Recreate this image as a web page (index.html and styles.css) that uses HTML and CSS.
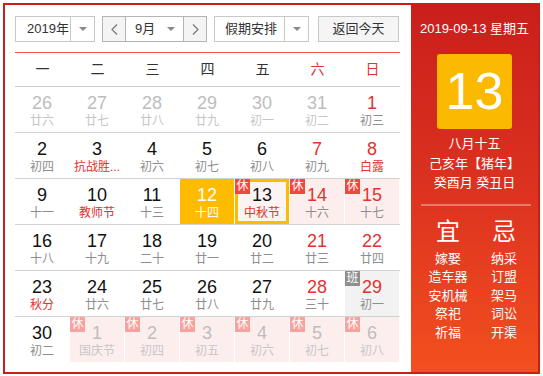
FILE: index.html
```html
<!DOCTYPE html>
<html lang="zh-CN">
<head>
<meta charset="utf-8">
<title>万年历</title>
<link rel="stylesheet" href="styles.css">
</head>
<body>
<div class="cal">
  <div class="main">
    <div class="toolbar">
      <div class="select year"><span class="val">2019年</span><span class="drop"><i class="tri"></i></span></div>
      <div class="month">
        <span class="nav"><svg width="7" height="11" viewBox="0 0 7 11"><polyline points="6,0.5 1,5.5 6,10.5" fill="none" stroke="#777" stroke-width="1.2"/></svg></span>
        <span class="mval"><span>9月</span><i class="tri"></i></span>
        <span class="nav"><svg width="7" height="11" viewBox="0 0 7 11"><polyline points="1,0.5 6,5.5 1,10.5" fill="none" stroke="#777" stroke-width="1.2"/></svg></span>
      </div>
      <div class="select hol"><span class="val">假期安排</span><span class="drop"><i class="tri"></i></span></div>
      <button class="back">返回今天</button>
    </div>
    <div class="weekhead">
      <span>一</span><span>二</span><span>三</span><span>四</span><span>五</span><span class="red">六</span><span class="red">日</span>
    </div>
    <div class="week">
      <div class="day other"><div class="num">26</div><div class="lun">廿六</div></div>
      <div class="day other"><div class="num">27</div><div class="lun">廿七</div></div>
      <div class="day other"><div class="num">28</div><div class="lun">廿八</div></div>
      <div class="day other"><div class="num">29</div><div class="lun">廿九</div></div>
      <div class="day other"><div class="num">30</div><div class="lun">初一</div></div>
      <div class="day other"><div class="num">31</div><div class="lun">初二</div></div>
      <div class="day wkend"><div class="num">1</div><div class="lun">初三</div></div>
    </div>
    <div class="week">
      <div class="day"><div class="num">2</div><div class="lun">初四</div></div>
      <div class="day"><div class="num">3</div><div class="lun fest">抗战胜...</div></div>
      <div class="day"><div class="num">4</div><div class="lun">初六</div></div>
      <div class="day"><div class="num">5</div><div class="lun">初七</div></div>
      <div class="day"><div class="num">6</div><div class="lun">初八</div></div>
      <div class="day wkend"><div class="num">7</div><div class="lun">初九</div></div>
      <div class="day wkend"><div class="num">8</div><div class="lun fest">白露</div></div>
    </div>
    <div class="week">
      <div class="day"><div class="num">9</div><div class="lun">十一</div></div>
      <div class="day"><div class="num">10</div><div class="lun fest">教师节</div></div>
      <div class="day"><div class="num">11</div><div class="lun">十三</div></div>
      <div class="day sel"><div class="num">12</div><div class="lun">十四</div></div>
      <div class="day rest today"><span class="tag">休</span><div class="num">13</div><div class="lun fest">中秋节</div></div>
      <div class="day rest wkend"><span class="tag">休</span><div class="num">14</div><div class="lun">十六</div></div>
      <div class="day rest wkend"><span class="tag">休</span><div class="num">15</div><div class="lun">十七</div></div>
    </div>
    <div class="week">
      <div class="day"><div class="num">16</div><div class="lun">十八</div></div>
      <div class="day"><div class="num">17</div><div class="lun">十九</div></div>
      <div class="day"><div class="num">18</div><div class="lun">二十</div></div>
      <div class="day"><div class="num">19</div><div class="lun">廿一</div></div>
      <div class="day"><div class="num">20</div><div class="lun">廿二</div></div>
      <div class="day wkend"><div class="num">21</div><div class="lun">廿三</div></div>
      <div class="day wkend"><div class="num">22</div><div class="lun">廿四</div></div>
    </div>
    <div class="week">
      <div class="day"><div class="num">23</div><div class="lun fest">秋分</div></div>
      <div class="day"><div class="num">24</div><div class="lun">廿六</div></div>
      <div class="day"><div class="num">25</div><div class="lun">廿七</div></div>
      <div class="day"><div class="num">26</div><div class="lun">廿八</div></div>
      <div class="day"><div class="num">27</div><div class="lun">廿九</div></div>
      <div class="day wkend"><div class="num">28</div><div class="lun">三十</div></div>
      <div class="day wkend work"><span class="tag">班</span><div class="num">29</div><div class="lun">初一</div></div>
    </div>
    <div class="week last">
      <div class="day"><div class="num">30</div><div class="lun">初二</div></div>
      <div class="day other rest"><span class="tag">休</span><div class="num">1</div><div class="lun">国庆节</div></div>
      <div class="day other rest"><span class="tag">休</span><div class="num">2</div><div class="lun">初四</div></div>
      <div class="day other rest"><span class="tag">休</span><div class="num">3</div><div class="lun">初五</div></div>
      <div class="day other rest"><span class="tag">休</span><div class="num">4</div><div class="lun">初六</div></div>
      <div class="day other rest"><span class="tag">休</span><div class="num">5</div><div class="lun">初七</div></div>
      <div class="day other rest"><span class="tag">休</span><div class="num">6</div><div class="lun">初八</div></div>
    </div>
  </div>
  <div class="side">
    <div class="s-date">2019-09-13 星期五</div>
    <div class="big">13</div>
    <div class="s-lunar">
      <div>八月十五</div>
      <div>己亥年【猪年】</div>
      <div>癸酉月 癸丑日</div>
    </div>
    <div class="sep"></div>
    <div class="yj">
      <div class="col">
        <div class="yj-t">宜</div>
        <div>嫁娶</div><div>造车器</div><div>安机械</div><div>祭祀</div><div>祈福</div>
      </div>
      <div class="col">
        <div class="yj-t">忌</div>
        <div>纳采</div><div>订盟</div><div>架马</div><div>词讼</div><div>开渠</div>
      </div>
    </div>
  </div>
</div>
</body>
</html>
```

FILE: styles.css
```css
body {
  margin: 0;
  font-family: "Liberation Sans", "Noto Sans CJK SC", sans-serif;
  background: #fff;
}

.cal {
  margin: 3px;
  width: 537px;
  height: 371px;
  box-sizing: border-box;
  border: 2px solid #c91f1b;
  display: flex;
  background: #fff;
}

.main {
  width: 406px;
  flex: none;
  box-sizing: border-box;
  padding: 11px 11px 0 10px;
}

/* toolbar */
.toolbar {
  display: flex;
  height: 26px;
  margin-bottom: 10px;
  font-size: 13px;
  color: #333;
}

.select {
  display: flex;
  box-sizing: border-box;
  height: 26px;
  border: 1px solid #c8c8c8;
  line-height: 24px;
}

.select .val {
  flex: 1;
  padding-left: 10px;
}

.select .drop {
  width: 23px;
  border-left: 1px solid #c8c8c8;
  display: flex;
  align-items: center;
  justify-content: center;
}

.tri {
  display: block;
  width: 0;
  height: 0;
  border-left: 4px solid transparent;
  border-right: 4px solid transparent;
  border-top: 4px solid #888;
}

.year {
  width: 80px;
}

.year .val {
  padding-left: 11px;
}

.month {
  display: flex;
  box-sizing: border-box;
  width: 105px;
  height: 26px;
  margin-left: 7px;
  border: 1px solid #b4b4b4;
  line-height: 24px;
}

.month .nav {
  width: 22px;
  background: #f4f4f4;
  display: flex;
  align-items: center;
  justify-content: center;
}

.month .nav:first-child {
  border-right: 1px solid #b4b4b4;
}

.month .nav:last-child {
  border-left: 1px solid #b4b4b4;
}

.mval {
  flex: 1;
  display: flex;
  align-items: center;
  justify-content: space-between;
  padding: 0 8px 0 9px;
}

.hol {
  width: 95px;
  margin-left: 7px;
}

.back {
  width: 81px;
  height: 26px;
  margin-left: 9px;
  padding: 0;
  border: 1px solid #c8c8c8;
  background: #f5f5f5;
  font-family: inherit;
  font-size: 13px;
  color: #333;
  line-height: 24px;
}

/* week header */
.weekhead {
  display: grid;
  grid-template-columns: repeat(7, 55px);
  height: 33px;
  border-top: 1px solid #f4564e;
  border-bottom: 1px solid #cfcfcf;
  line-height: 33px;
  font-size: 14px;
  color: #333;
  text-align: center;
}

.weekhead .red {
  color: #e2332e;
}

/* days */
.week {
  display: grid;
  grid-template-columns: repeat(7, 55px);
  height: 45px;
  border-bottom: 1px solid #d2d2d2;
}

.week.last {
  border-bottom: none;
}

.day {
  position: relative;
  margin-right: 1px;
  box-sizing: border-box;
  height: 45px;
  padding-top: 6px;
  text-align: center;
}

.num {
  font-size: 18px;
  line-height: 20px;
  color: #111;
}

.lun {
  font-size: 12px;
  line-height: 16px;
  color: #8e8e8e;
  white-space: nowrap;
}

.lun.fest {
  color: #e5302b;
}

.wkend .num {
  color: #e2332e;
}

.other .num {
  color: #bdbdbd;
}

.other .lun {
  color: #c6c6c6;
}

.rest {
  background: #fdeeee;
}

.tag {
  position: absolute;
  left: 0;
  top: 0;
  width: 15px;
  height: 15px;
  background: #f4453e;
  color: #fff;
  font-size: 12px;
  line-height: 15px;
  text-align: center;
}

.other .tag {
  background: #f7a29e;
}

.work {
  background: #f2f2f2;
}

.work .tag {
  background: #8f8f8f;
}

.sel {
  background: #ffbb00;
}

.sel .num,
.sel .lun {
  color: #fff;
}

.today {
  background: #fdf3f3;
  box-shadow: inset 0 0 0 3px #ffbb00;
}

/* side panel */
.side {
  flex: 1;
  background: linear-gradient(180deg, #c91f1b 0%, #dc3220 50%, #f2501f 100%);
  color: #fff;
  text-align: center;
}

.s-date {
  margin-top: 15px;
  font-size: 13px;
  line-height: 18px;
}

.big {
  width: 75px;
  height: 75px;
  margin: 16px auto 0;
  border-radius: 3px;
  background: #fbb900;
  font-size: 52px;
  line-height: 75px;
}

.s-lunar {
  margin-top: 5px;
  font-size: 13px;
  line-height: 19.5px;
}

.sep {
  height: 2px;
  margin: 11px 7px 0 10px;
  background: rgba(255, 255, 255, 0.35);
}

.yj {
  display: flex;
  justify-content: center;
  padding-left: 3px;
  font-size: 13px;
  line-height: 18.5px;
}

.yj .col {
  width: 56px;
}

.yj-t {
  margin-top: 11px;
  margin-bottom: 3px;
  font-size: 24px;
  line-height: 30px;
}
```
